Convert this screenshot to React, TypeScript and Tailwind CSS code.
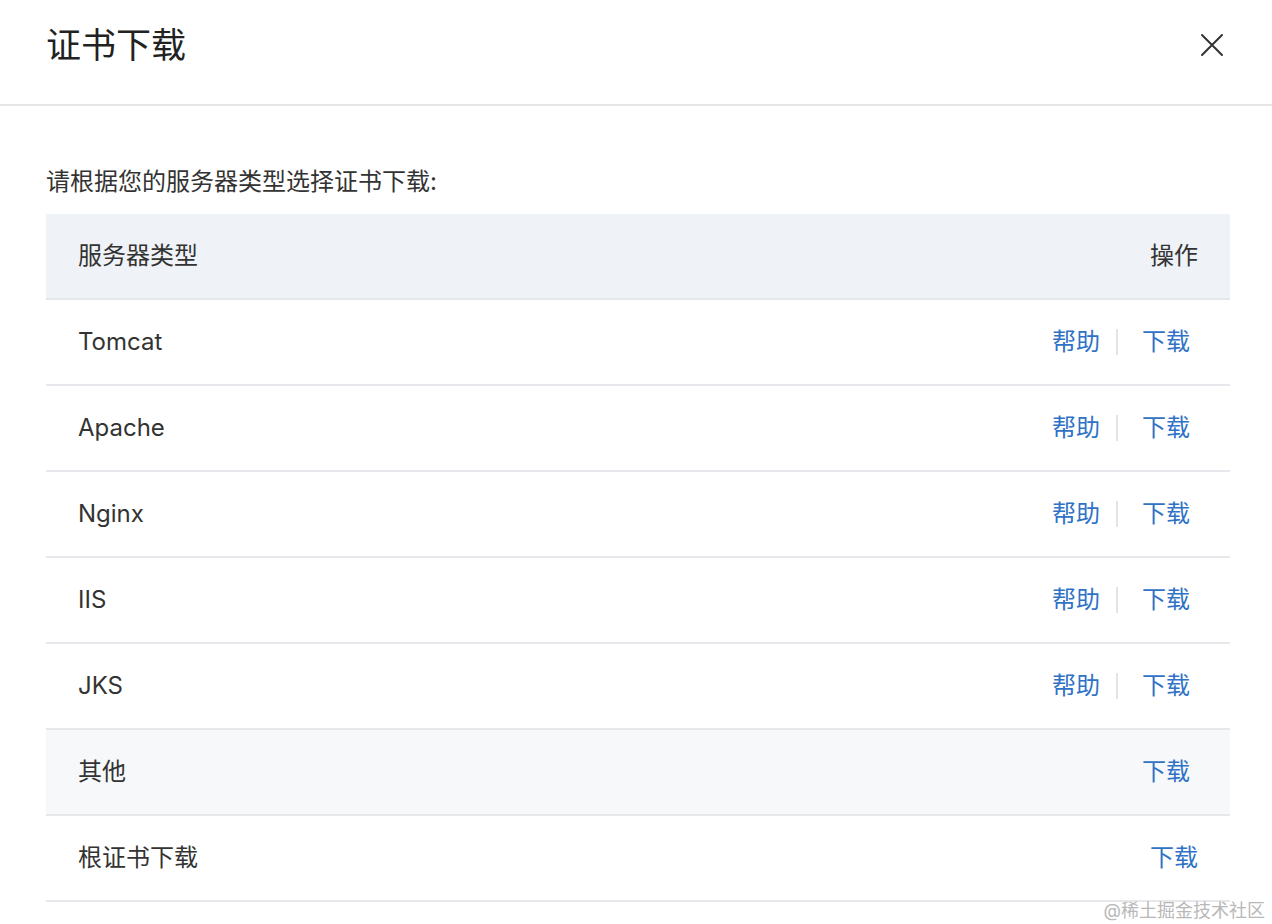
import React from "react";

const rows: { name: string; help: boolean; bg?: boolean }[] = [
  { name: "Tomcat", help: true },
  { name: "Apache", help: true },
  { name: "Nginx", help: true },
  { name: "IIS", help: true },
  { name: "JKS", help: true },
  { name: "其他", help: false, bg: true },
];

export default function App() {
  return (
    <div
      className="relative w-[1272px] h-[924px] bg-white overflow-hidden text-[#333]"
      style={{ fontFamily: '"Inter", "Noto Sans CJK SC", sans-serif' }}
    >
      <div className="h-[106px] border-b-2 border-[#e6e6e6] flex items-center justify-between pl-[46px] pr-[46px]">
        <h1 className="text-[35px] text-[#222] leading-none font-normal -mt-[14px]">证书下载</h1>
        <button className="w-[28px] h-[28px] flex items-center justify-center -mt-[14px]">
          <svg width="24" height="24" viewBox="0 0 24 24" fill="none" stroke="#333" strokeWidth="2" strokeLinecap="round">
            <path d="M2 2 L22 22 M22 2 L2 22" />
          </svg>
        </button>
      </div>

      <div className="px-[46px]">
        <p className="text-[24px] leading-none pt-[64px] pb-[20px]">请根据您的服务器类型选择证书下载:</p>

        <div className="w-[1184px]">
          <div className="h-[86px] bg-[#eff2f6] border-b-2 border-[#e4e6ea] flex items-center justify-between pl-[32px] pr-[32px] text-[24px]">
            <span>服务器类型</span>
            <span>操作</span>
          </div>
          {rows.map((r) => (
            <div
              key={r.name}
              className={`h-[86px] border-b-2 border-[#e6e8eb] flex items-center justify-between pl-[32px] pr-[40px] text-[24px] ${r.bg ? "bg-[#f6f8fa]" : "bg-white"}`}
            >
              <span>{r.name}</span>
              <div className="flex items-center text-[#2f72c6]">
                {r.help && (
                  <>
                    <span>帮助</span>
                    <span className="w-[2px] h-[26px] bg-[#e2e4e8] ml-[16px] mr-[24px]" />
                  </>
                )}
                <span>下载</span>
              </div>
            </div>
          ))}
          <div className="h-[86px] border-b-2 border-[#e6e8eb] flex items-center justify-between pl-[32px] pr-[32px] text-[24px]">
            <span>根证书下载</span>
            <span className="text-[#2f72c6]">下载</span>
          </div>
        </div>
      </div>

      <div className="absolute right-[7px] bottom-[4px] text-[18px] text-[#b8b8b8] leading-none">@稀土掘金技术社区</div>
    </div>
  );
}
